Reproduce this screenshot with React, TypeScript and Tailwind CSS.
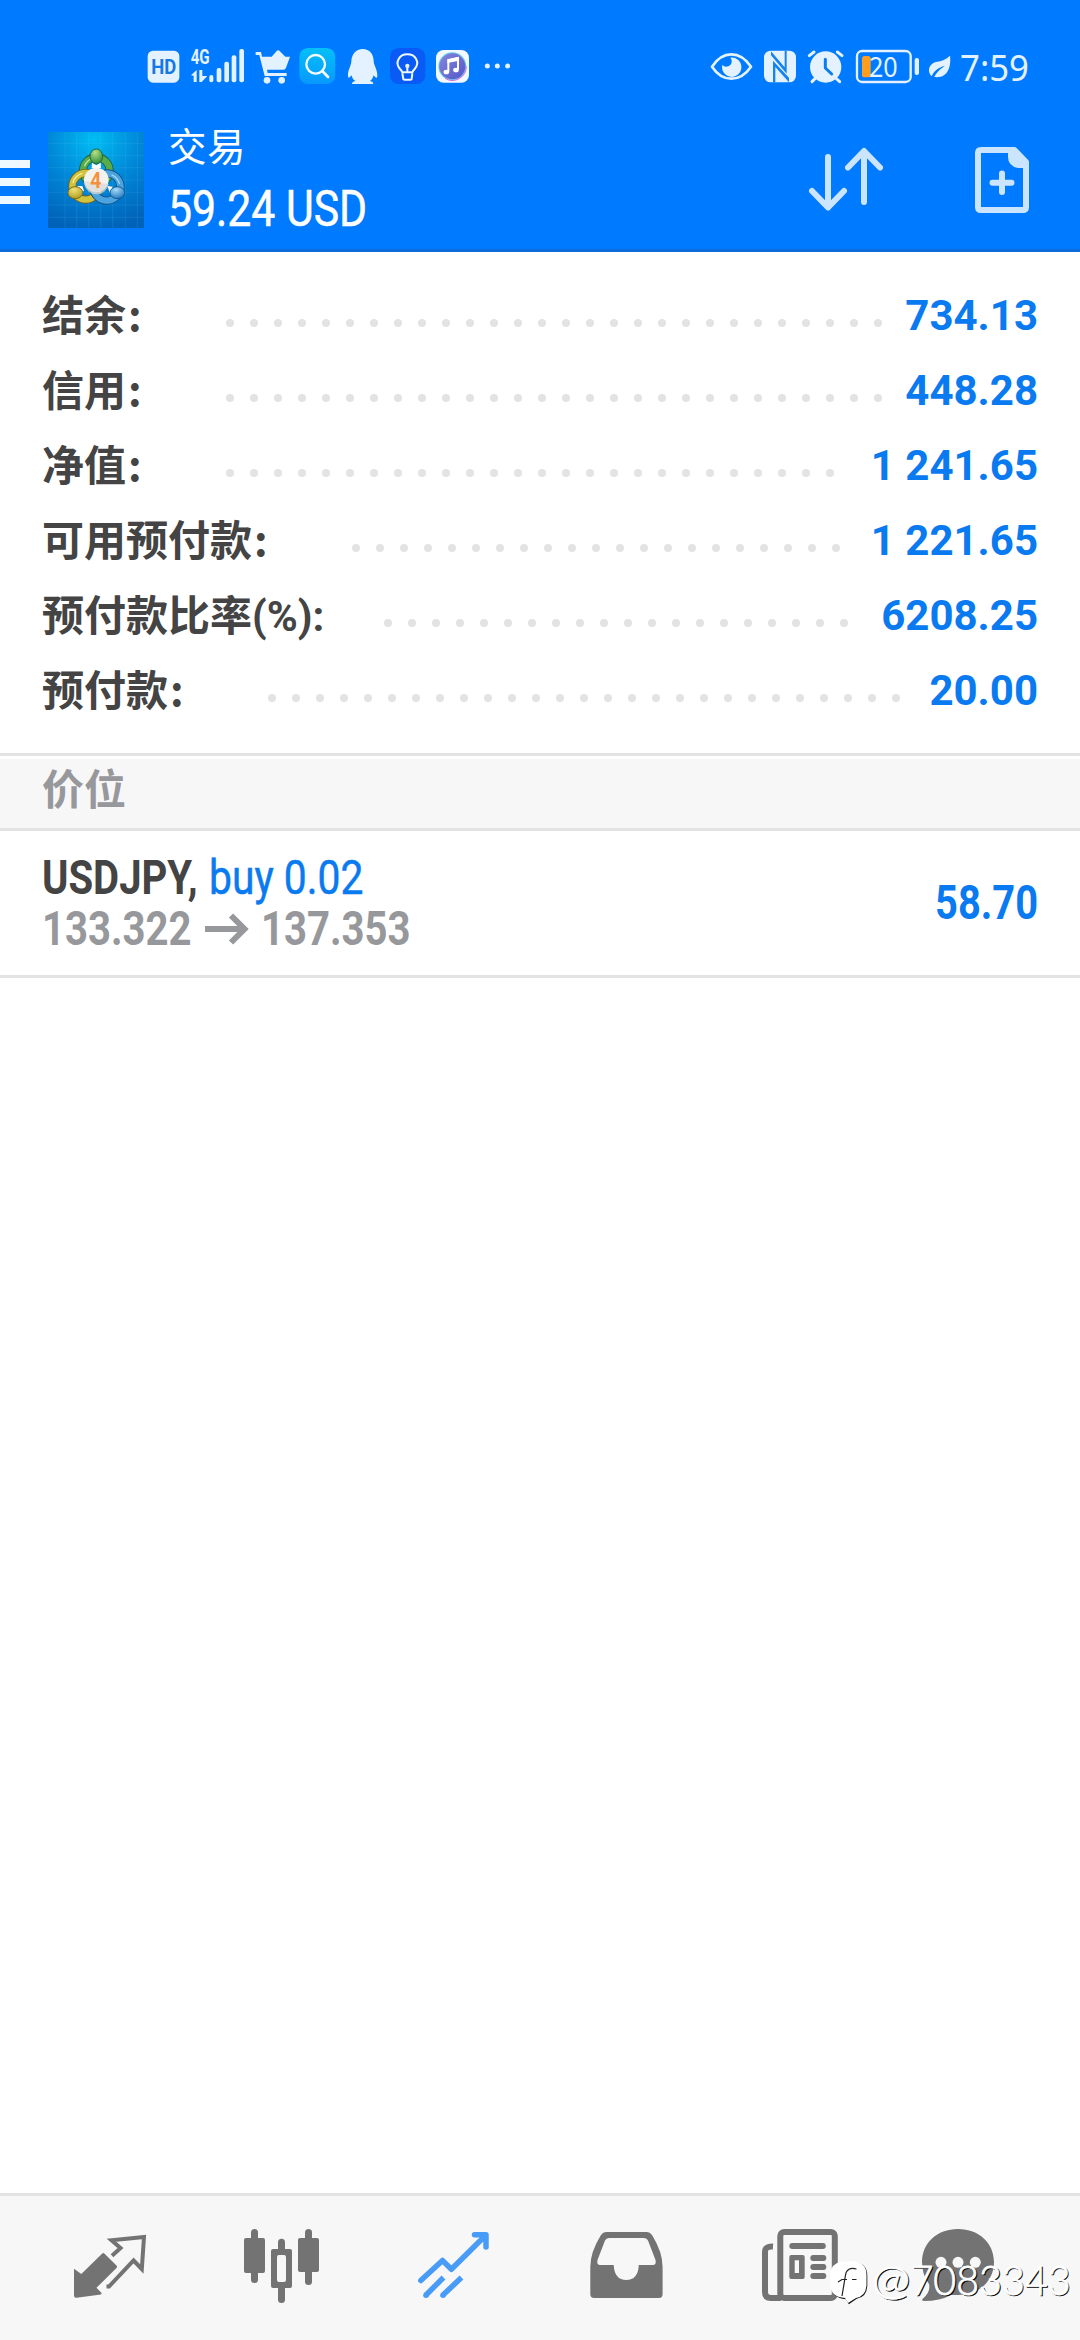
import React from "react";

const PALE = "#e4f2ff";
const GRAY = "#737373";

const rows = [
  { label: "结余", value: "734.13", dots: 28 },
  { label: "信用", value: "448.28", dots: 28 },
  { label: "净值", value: "1 241.65", dots: 26 },
  { label: "可用预付款", value: "1 221.65", dots: 21 },
  { label: "预付款比率(%)", value: "6208.25", dots: 20 },
  { label: "预付款", value: "20.00", dots: 27 },
];

/* Status icons are drawn on a grid of three units per pixel. */
function Glyph({ x, w, children }: { x: number; w: number; children: React.ReactNode }) {
  return (
    <svg width={w / 3} height={40} viewBox={`${x} 45 ${w} 120`} className="shrink-0 overflow-visible" fill={PALE}>
      {children}
    </svg>
  );
}

function StatusBar() {
  return (
    <div className="flex h-[110px] items-start pt-[45px]">
      <div className="flex pl-[145px]">
        <Glyph x={45} w={120}>
          <rect x="53" y="62" width="95" height="96" rx="16" />
          <text x="64" y="132" fontSize="60" fontWeight="700" fill="#1478e6" fontFamily="Roboto, sans-serif" textLength="75" lengthAdjust="spacingAndGlyphs">HD</text>
        </Glyph>
        <Glyph x={165} w={195}>
          <text x="182" y="101" fontSize="60" fontWeight="700" fontFamily="Roboto, sans-serif" textLength="57" lengthAdjust="spacingAndGlyphs">4G</text>
          <path d="M183 136 L200 120 V156 H191 V137Z M208 120 H217 V138 H232 L215 156 H208Z" />
          <rect x="238" y="135" width="12" height="22" rx="6" />
          <rect x="260" y="114" width="14" height="43" rx="6" />
          <rect x="283" y="95" width="14" height="62" rx="6" />
          <rect x="305" y="76" width="14" height="81" rx="6" />
          <rect x="328" y="57" width="14" height="100" rx="6" />
        </Glyph>
        <Glyph x={360} w={135}>
          <path d="M396 80 H425 L440 63 Q444 58 449 63 L466 80 H480 L468 113 Q466 119 460 119 H411 L413 129 H470 V138 H404 L388 75 H377 V66 H393Z" />
          <circle cx="411" cy="151" r="10" />
          <circle cx="455" cy="151" r="10" />
        </Glyph>
        <Glyph x={495} w={135}>
          <defs>
            <linearGradient id="cyan" x1="0" y1="0" x2="0" y2="1">
              <stop offset="0" stopColor="#04c0f6" />
              <stop offset="1" stopColor="#0898ff" />
            </linearGradient>
          </defs>
          <rect x="508" y="54" width="108" height="108" rx="26" fill="url(#cyan)" />
          <circle cx="557" cy="103" r="28" fill="none" stroke="#f4fcff" strokeWidth="7" />
          <path d="M577 123 L594 141" stroke="#f4fcff" strokeWidth="8" strokeLinecap="round" />
        </Glyph>
        <Glyph x={630} w={135}>
          <path d="M698 57 C719 57 731 73 731 94 C731 106 742 118 742 137 C741 147 737 143 731 136 Q728 148 720 153 Q730 155 730 162 H666 Q666 155 676 153 Q667 148 664 136 C658 144 655 147 654 137 C653 119 664 108 664 94 C665 73 678 57 698 57Z" />
        </Glyph>
        <Glyph x={765} w={135}>
          <rect x="780" y="54" width="106" height="108" rx="26" fill="#0a5af5" />
          <path d="M817 127 Q815 122 810 117 C793 98 808 73 832 73 C857 73 871 98 854 117 Q849 122 847 127Z M817 130 L820 147 Q821 149 825 149 H840 Q844 149 845 147 L847 130 M832 127 V110" fill="none" stroke="#eef8ff" strokeWidth="6" strokeLinejoin="round" />
          <circle cx="832" cy="108" r="6.5" />
        </Glyph>
        <Glyph x={900} w={135}>
          <defs>
            <linearGradient id="music" x1="0" y1="0" x2="1" y2="1">
              <stop offset="0" stopColor="#8586dc" />
              <stop offset="1" stopColor="#5457c8" />
            </linearGradient>
          </defs>
          <rect x="918" y="60" width="99" height="98" rx="23" fill="#f4f9ff" />
          <circle cx="967" cy="109" r="42" fill="#66cdf2" />
          <path d="M1009 109 A42 42 0 0 1 945 145" stroke="#dd6ad8" strokeWidth="3" fill="none" />
          <circle cx="967" cy="109" r="39" fill="url(#music)" />
          <path d="M955 125 V91 L984 84 V118" fill="none" stroke="#fff" strokeWidth="6" />
          <path d="M952 88 L987 80 V92 L952 99Z" fill="#fff" />
          <ellipse cx="949" cy="126" rx="8.500" ry="7" fill="#fff" />
          <ellipse cx="978" cy="120" rx="8.500" ry="7" fill="#fff" />
        </Glyph>
        <Glyph x={1035} w={120}>
          <circle cx="1072" cy="108" r="7.500" />
          <circle cx="1102" cy="108" r="7.500" />
          <circle cx="1133" cy="108" r="7.500" />
        </Glyph>
      </div>
      <div className="flex pl-[190px]">
        <Glyph x={45} w={165}>
          <path d="M66 110 Q90 73 124 73 Q158 73 183 110 Q158 146 124 146 Q90 146 66 110Z" fill="none" stroke={PALE} strokeWidth="8" strokeLinejoin="round" />
          <path d="M97 105 A29 29 0 1 0 121 83 A15 15 0 1 1 97 105Z" />
        </Glyph>
        <Glyph x={210} w={120}>
          <rect x="222" y="62" width="96" height="95" rx="20" />
          <path d="M243 64 L284 112 V62 H290 V131 L243 76Z" fill="#1683ee" />
          <path d="M249 157 V92 L297 143 V157 L256 111 V157Z" fill="#1683ee" />
        </Glyph>
        <Glyph x={330} w={150}>
          <circle cx="407" cy="111" r="47" />
          <path d="M358 77 L372 66 M442 66 L456 77 M375 146 L366 155 M439 146 L449 155" stroke={PALE} strokeWidth="9" strokeLinecap="round" />
          <path d="M406 88 V114 L425 132" fill="none" stroke="#0b7cf2" strokeWidth="9" strokeLinecap="round" strokeLinejoin="round" />
        </Glyph>
        <Glyph x={480} w={225}>
          <rect x="501" y="63" width="161" height="93" rx="15" fill="none" stroke={PALE} strokeWidth="7" />
          <rect x="516" y="78" width="26" height="64" rx="8" fill="#ff9d1c" />
          <text x="537" y="140" fontSize="83" fontWeight="400" fontFamily='"Noto Sans", sans-serif' textLength="86" lengthAdjust="spacingAndGlyphs">20</text>
          <rect x="674" y="84" width="13" height="51" rx="6" />
        </Glyph>
        <Glyph x={705} w={90}>
          <path d="M780 77 C784 110 774 146 733 141 C741 124 754 115 764 108 C745 112 731 124 725 139 C709 123 718 101 738 96 C756 93 768 88 780 77Z" />
        </Glyph>
      </div>
      <svg width="72" height="40" viewBox="0 0 72 40" className="ml-[3px] shrink-0 overflow-visible" fill={PALE}>
        <text x="2" y="36" fontSize="37" fontFamily='"Noto Sans", sans-serif' textLength="69" lengthAdjust="spacingAndGlyphs">7:59</text>
      </svg>
    </div>
  );
}

function AppLogo() {
  return (
    <svg width="96" height="96" viewBox="144 66 288 288" className="ml-[18px] shrink-0">
      <defs>
        <radialGradient id="bg" cx="0.48" cy="0.08" r="0.95">
          <stop offset="0" stopColor="#00bdf2" />
          <stop offset="0.5" stopColor="#0087d8" />
          <stop offset="1" stopColor="#0062b8" />
        </radialGradient>
        <radialGradient id="gr" cx="0.4" cy="0.25" r="0.8">
          <stop offset="0" stopColor="#b5e08a" />
          <stop offset="1" stopColor="#2c8a35" />
        </radialGradient>
        <radialGradient id="ye" cx="0.4" cy="0.25" r="0.8">
          <stop offset="0" stopColor="#f0e27a" />
          <stop offset="1" stopColor="#b09a1c" />
        </radialGradient>
        <radialGradient id="bl" cx="0.4" cy="0.25" r="0.8">
          <stop offset="0" stopColor="#a5dbfa" />
          <stop offset="1" stopColor="#1c74bd" />
        </radialGradient>
      </defs>
      <rect x="144" y="66" width="288" height="288" fill="url(#bg)" />
      <path d="M195 66V354M230 66V354M266 66V354M302 66V354M338 66V354M376 66V354M412 66V354M144 100H432M144 137H432M144 173H432M144 210H432M144 247H432M144 285H432M144 322H432" stroke="#7fd4ff" strokeOpacity="0.18" strokeWidth="2" />
      <g fill="none" strokeLinecap="round">
        <circle cx="289" cy="182" r="40" stroke="#1d5e3a" strokeWidth="24" />
        <circle cx="289" cy="182" r="40" stroke="#58ac4c" strokeWidth="19" />
        <path d="M254 167 A38 38 0 0 1 276 146" stroke="#b9e3a0" strokeWidth="4" />
        <circle cx="257" cy="229" r="40" stroke="#70651e" strokeWidth="24" />
        <circle cx="257" cy="229" r="40" stroke="#d2c23c" strokeWidth="19" />
        <path d="M219 218 A40 40 0 0 1 246 190" stroke="#f6eda0" strokeWidth="4" />
        <path d="M320 190 A41 41 0 1 1 280 236" stroke="#164f86" strokeWidth="24" />
        <path d="M320 190 A41 41 0 1 1 280 236" stroke="#4ba4de" strokeWidth="19" />
        <path d="M336 195 A40 40 0 0 1 358 220" stroke="#a8dcf8" strokeWidth="4" />
      </g>
      <path d="M276 158 L289 166 L302 158 L303 174 H275Z M231 228 L247 228 L252 242 L240 250Z M322 228 L338 230 L330 250Z" fill="#fff" />
      <ellipse cx="289" cy="139" rx="19" ry="22" fill="url(#gr)" stroke="#1f6b3a" strokeWidth="3" />
      <ellipse cx="226" cy="248" rx="22" ry="18" fill="url(#ye)" stroke="#7c6e1a" strokeWidth="3" />
      <ellipse cx="352" cy="248" rx="22" ry="18" fill="url(#bl)" stroke="#155a94" strokeWidth="3" />
      <circle cx="289" cy="210" r="37" fill="#f4f2ee" />
      <path d="M252 214 L326 222 A37 37 0 0 1 253 222Z" fill="#d9d7d3" fillOpacity="0.7" />
      <text x="271" y="234" fontSize="66" fontWeight="700" fontFamily="Roboto, sans-serif" fill="#f5913c" textLength="33" lengthAdjust="spacingAndGlyphs">4</text>
    </svg>
  );
}

function Header() {
  return (
    <header className="flex h-[252px] flex-col border-b-[3px] border-[#0f6bd8] bg-[#007aff]">
      <StatusBar />
      <div className="flex h-[139px] items-start pt-[22px]">
        <div className="mt-[28px] flex w-[30px] flex-col gap-[10px]">
          <div className="h-2 bg-[#eef8ff]" />
          <div className="h-2 bg-[#eef8ff]" />
          <div className="h-2 bg-[#eef8ff]" />
        </div>
        <AppLogo />
        <div className="ml-[24px] w-[300px] text-white">
          <div className="-mt-[6px] h-[54px] text-[38.500px] leading-[44px] tracking-[0.5px]">交易</div>
          <div className="w-max origin-left scale-x-[0.855] text-[50px] leading-[58px] whitespace-nowrap [-webkit-text-stroke:0.5px_white]">59.24 USD</div>
        </div>
        <svg width="80" height="72" viewBox="806 144 80 72" className="mt-[12px] ml-[338px]" fill="none" stroke="#cce5ff" strokeWidth="6" strokeLinecap="round" strokeLinejoin="round">
          <path d="M828 157V207M812 191L828 207.500L844 191M864 202V152M848 167.500L864 151L880 167.500" />
        </svg>
        <svg width="66" height="72" viewBox="970 144 66 72" className="mt-[12px] ml-[84px]" fill="none" stroke="#cce5ff" strokeWidth="6" strokeLinecap="round" strokeLinejoin="round">
          <path d="M981 150H1014.500L1026 162V207Q1026 210 1023 210H981Q978 210 978 207V153Q978 150 981 150Z" />
          <path d="M1008 149H1015L1028 162V168H1018Q1008 166 1008 157Z" fill="#cce5ff" stroke="none" />
          <path d="M1002 173.500V192M992.500 182.700H1011.500" />
        </svg>
      </div>
    </header>
  );
}

function Summary() {
  return (
    <section className="flex h-[501px] flex-col pt-[26px]">
      {rows.map((r) => (
        <div key={r.label} className="flex h-[75px] items-center px-[42px] text-[42px] font-bold">
          <div className="mt-[2px] flex leading-[75px] whitespace-nowrap text-[#444444]">
            {r.label}
            {r.label.endsWith(")") ? (
              <span className="mr-[2px]">:</span>
            ) : (
              <span className="-mt-[4px] w-[42px] pl-[2px] font-['Noto_Sans_CJK_SC',sans-serif]">:</span>
            )}
          </div>
          <div className="mt-[15px] ml-[58px] flex gap-[16.500px]">
            {Array.from({ length: r.dots }, (_, i) => (
              <div key={i} className="size-[7.500px] shrink-0 rounded-full bg-[#e3e3e3]" />
            ))}
          </div>
          <div className="ml-auto leading-[75px] whitespace-nowrap text-[#0a7af0]">{r.value}</div>
        </div>
      ))}
    </section>
  );
}

function Position() {
  return (
    <section className="flex h-[147px] items-start justify-between border-b-[3px] border-[#e3e3e3] px-[42px]">
      <div className="w-[420px] pt-[21px] text-[48px] leading-[51px]">
        <div className="flex whitespace-nowrap">
          <div className="w-[167px]">
            <div className="w-max origin-left scale-x-[0.835] font-bold text-[#444444]">USDJPY,</div>
          </div>
          <div className="w-max origin-left scale-x-[0.85] text-[#0a7af0] [-webkit-text-stroke:0.5px_#0a7af0]">buy 0.02</div>
        </div>
        <div className="flex items-center font-bold whitespace-nowrap text-[#97989c]">
          <div className="w-[163px]">
            <div className="w-max origin-left scale-x-[0.835]">133.322</div>
          </div>
          <svg width="44" height="32" viewBox="0 0 44 32" fill="none" stroke="#97989c" strokeWidth="6">
            <path d="M0 16H38M26 2.500L39.500 16L26 29.500" />
          </svg>
          <div className="ml-[12px] w-max origin-left scale-x-[0.835]">137.353</div>
        </div>
      </div>
      <div className="w-max origin-right scale-x-[0.83] pt-[46px] text-[48px] leading-[51px] font-bold text-[#0a7af0]">58.70</div>
    </section>
  );
}

function TabIcon({ x, children }: { x: number; children: React.ReactNode }) {
  return (
    <svg width={80} height={82} viewBox={`${x} 45 80 82`} className="shrink-0" fill={GRAY}>
      {children}
    </svg>
  );
}

function TabBar() {
  return (
    <nav className="relative flex h-[147px] items-start gap-[92px] border-t-[3px] border-[#e3e3e3] bg-[#f7f7f8] pt-[29px] pl-[70px]">
      <TabIcon x={70}>
        <path d="M74 88.700L81.300 94L102 73.700Q103.300 72.500 104.600 73.700L116.500 85.500Q117.500 86.700 116.500 88L96.500 107.700L101.600 113L101 114.500L76.500 117.700Q74 118 74 115.500Z" />
        <path d="M112 75.700L120.500 68L111.500 60.200L144 57L141.800 89L133.600 80.500L109 106.500H106.500" fill="none" stroke={GRAY} strokeWidth="4" />
      </TabIcon>
      <TabIcon x={242}>
        <rect x="251" y="49" width="7" height="54" rx="3.500" />
        <rect x="244" y="58" width="21" height="35" rx="2" />
        <rect x="305" y="49" width="7" height="56" rx="3.500" />
        <rect x="298" y="58" width="21" height="34" rx="2" />
        <rect x="278" y="58.700" width="7" height="14" rx="3.500" />
        <rect x="278" y="105" width="7" height="18" rx="3.500" />
        <path fillRule="evenodd" d="M273 69H290Q292 69 292 71V106Q292 108 290 108H273Q271 108 271 106V71Q271 69 273 69ZM279 75Q277 75 277 77V100Q277 102 279 102H284Q286 102 286 100V77Q286 75 284 75Z" />
      </TabIcon>
      <TabIcon x={414}>
        <g fill="none" stroke="#489cf8" strokeWidth="5.500" strokeLinejoin="round">
          <path d="M420.800 100.500L442.500 80.500L451.400 89.300L485.500 55.500M474.500 54.800H486V67" strokeLinecap="round" />
          <path d="M426 115L443.500 97.500M443 115L461.500 97.500" />
        </g>
        <path d="M477 53H488V66Z" fill="#489cf8" />
        <circle cx="426" cy="115.200" r="2.800" fill="#489cf8" />
        <circle cx="443" cy="115.200" r="2.800" fill="#489cf8" />
      </TabIcon>
      <TabIcon x={586}>
        <path fillRule="evenodd" d="M606 52H647Q650 52 652 55Q662.600 72 662.600 87V114Q662.600 118 659 118H594Q590.300 118 590.300 114V87Q590.300 72 601 55Q603 52 606 52ZM609 58Q606 58 605 60.500L597.500 80Q596.500 85 600 85H613.700Q614.500 100 626.300 100Q638 100 638.800 85H653Q656.500 85 655.500 80L648 60.500Q647 58 644 58Z" />
      </TabIcon>
      <TabIcon x={758}>
        <rect x="780.300" y="52" width="54.500" height="66" rx="4" fill="none" stroke={GRAY} strokeWidth="6" />
        <path d="M773 66.500Q765 66 765 72V112Q765 118 771 118H781" fill="none" stroke={GRAY} strokeWidth="6" />
        <rect x="789.300" y="63" width="36.500" height="6" rx="3" />
        <path fillRule="evenodd" d="M791.300 75H802.700Q804.700 75 804.700 77V97Q804.700 99 802.700 99H791.300Q789.300 99 789.300 97V77Q789.300 75 791.300 75ZM794.700 80.300V93H799V80.300Z" />
        <rect x="810.300" y="75" width="16" height="6" rx="3" />
        <rect x="810.300" y="84" width="16" height="6" rx="3" />
        <rect x="810.300" y="93" width="16" height="6" rx="3" />
      </TabIcon>
      <svg width={80} height={82} viewBox="918 45 80 82" className="-ml-[12px] shrink-0" fill={GRAY}>
        <path d="M958 49C979 49 994 63 994 82C994 101 979 115 958 115H951Q940 121 924 121Q921.500 121 922.500 119Q931 112 929 104Q922 95 922 82C922 63 937 49 958 49Z" />
        <circle cx="941" cy="82.300" r="5.500" fill="#f7f7f8" />
        <circle cx="958" cy="82.300" r="5.500" fill="#f7f7f8" />
        <circle cx="975.300" cy="82.300" r="5.500" fill="#f7f7f8" />
      </svg>
      <div className="absolute top-[61px] left-[827px] flex items-center">
        <svg width="44" height="50" viewBox="827 78 44 50">
          <path d="M842 82.500H855Q866.500 84 866.500 96V106Q866 117 856 119L848 124.500L845 119.500Q830 118 830 104V96Q831 84 842 82.500Z" fill="#111" transform="translate(0.8 0.8)" />
          <path d="M842 82.500H855Q866.500 84 866.500 96V106Q866 117 856 119L848 124L845 119Q830 118 830 104V96Q831 84 842 82.500Z" fill="#fff" />
          <path d="M856.500 90Q847 87.500 845.500 96L842 117M838 103L842 100.500H847M852 100.500H856.500" stroke="#222" strokeWidth="1.200" fill="none" />
        </svg>
        <svg width="206" height="50" viewBox="871 78 206 50" className="overflow-visible" fontFamily="Lato, sans-serif" fontWeight="300">
          <g fill="#000" stroke="#000" strokeWidth="0.500" fontSize="42">
            <text x="873.300" y="116" textLength="38" lengthAdjust="spacingAndGlyphs">@</text>
            <text x="911.700" y="117.200" textLength="160" lengthAdjust="spacingAndGlyphs">7083343</text>
          </g>
          <g fill="#fff" stroke="#fff" strokeWidth="0.900" fontSize="42">
            <text x="872" y="115" textLength="38" lengthAdjust="spacingAndGlyphs">@</text>
            <text x="910.500" y="116" textLength="160" lengthAdjust="spacingAndGlyphs">7083343</text>
          </g>
        </svg>
      </div>
    </nav>
  );
}

export default function App() {
  return (
    <div className="flex h-[2340px] w-[1080px] flex-col overflow-hidden bg-white font-[Roboto,'Noto_Sans_CJK_SC',sans-serif]" lang="zh-CN">
      <Header />
      <Summary />
      <div className="h-[78px] border-y-[3px] border-[#e3e3e3] pt-[3px]">
        <div className="h-[69px] bg-[#f7f7f8] pl-[42px] text-[42px] leading-[64px] font-bold text-[#97989c]">价位</div>
      </div>
      <Position />
      <main className="flex-1" />
      <TabBar />
    </div>
  );
}
